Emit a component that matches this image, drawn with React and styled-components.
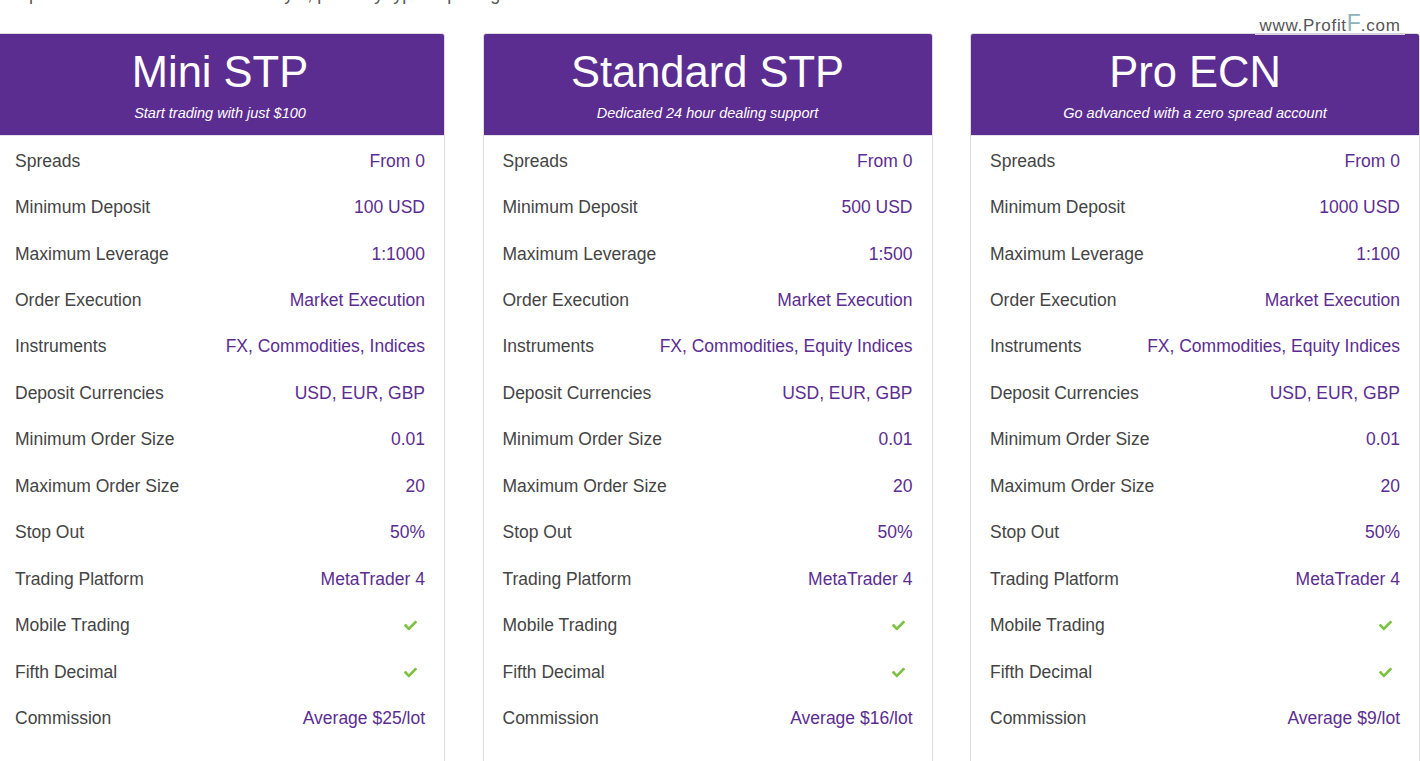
import React from 'react';
import styled, { createGlobalStyle } from 'styled-components';
import { FaCheck } from 'react-icons/fa';

const GlobalStyle = createGlobalStyle`
  html, body {
    margin: 0;
    padding: 0;
    background: #fff;
    overflow: hidden;
  }
  body {
    font-family: 'Liberation Sans', Arial, sans-serif;
  }
`;

const accounts = [
  {
    title: 'Mini STP',
    tagline: 'Start trading with just $100',
    values: ['From 0', '100 USD', '1:1000', 'Market Execution', 'FX, Commodities, Indices', 'USD, EUR, GBP', '0.01', '20', '50%', 'MetaTrader 4', true, true, 'Average $25/lot'],
  },
  {
    title: 'Standard STP',
    tagline: 'Dedicated 24 hour dealing support',
    values: ['From 0', '500 USD', '1:500', 'Market Execution', 'FX, Commodities, Equity Indices', 'USD, EUR, GBP', '0.01', '20', '50%', 'MetaTrader 4', true, true, 'Average $16/lot'],
  },
  {
    title: 'Pro ECN',
    tagline: 'Go advanced with a zero spread account',
    values: ['From 0', '1000 USD', '1:100', 'Market Execution', 'FX, Commodities, Equity Indices', 'USD, EUR, GBP', '0.01', '20', '50%', 'MetaTrader 4', true, true, 'Average $9/lot'],
  },
];

const labels = [
  'Spreads',
  'Minimum Deposit',
  'Maximum Leverage',
  'Order Execution',
  'Instruments',
  'Deposit Currencies',
  'Minimum Order Size',
  'Maximum Order Size',
  'Stop Out',
  'Trading Platform',
  'Mobile Trading',
  'Fifth Decimal',
  'Commission',
];

const App = () => {
  return (
    <Page>
      <GlobalStyle />
      <Intro>Open an account and choose a style, pick any type of pricing</Intro>
      <Watermark>
        www.Profit<BigF>F</BigF>.com
      </Watermark>
      <Cards>
        {accounts.map((acc) => (
          <Card key={acc.title}>
            <CardHeader>
              <Title>{acc.title}</Title>
              <Tagline>{acc.tagline}</Tagline>
            </CardHeader>
            <Rows>
              {labels.map((label, i) => (
                <Row key={label}>
                  <Label>{label}</Label>
                  {acc.values[i] === true ? (
                    <Tick>
                      <FaCheck />
                    </Tick>
                  ) : (
                    <Value>{acc.values[i]}</Value>
                  )}
                </Row>
              ))}
            </Rows>
          </Card>
        ))}
      </Cards>
    </Page>
  );
};

export default App;

const Page = styled.div`
  position: relative;
  width: 1420px;
  height: 761px;
  overflow: hidden;
`;

const Intro = styled.p`
  margin: -18px 0 0;
  padding-left: 15px;
  font-size: 18px;
  line-height: 24px;
  color: #555;
`;

const Watermark = styled.div`
  position: absolute;
  top: 11px;
  left: 1255px;
  width: 150px;
  height: 22px;
  background: #fff;
  border-bottom: 2px solid #d6d3dc;
  font-size: 17px;
  letter-spacing: 0.7px;
  line-height: 24px;
  color: #555;
  text-align: center;
  white-space: nowrap;
  z-index: 2;
`;

const BigF = styled.span`
  font-size: 23px;
  color: #8fb2b9;
  letter-spacing: 0;
`;

const Cards = styled.div`
  display: flex;
  gap: 37.5px;
  margin: 27px 0 0 -5px;
`;

const Card = styled.div`
  flex: 0 0 450px;
  box-sizing: border-box;
  border: 1px solid #dcdcdc;
  border-radius: 3px 3px 0 0;
  background: #fff;
  padding-bottom: 60px;
`;

const CardHeader = styled.div`
  background: #5c2d91;
  border-radius: 2px 2px 0 0;
  border-bottom: 1px solid #e4e1ea;
  padding: 13.5px 10px 12.5px;
  text-align: center;
  color: #fff;
`;

const Title = styled.h2`
  margin: 0;
  font-weight: 400;
  font-size: 43.5px;
  line-height: 48px;
`;

const Tagline = styled.div`
  margin-top: 7px;
  font-style: italic;
  font-size: 14.5px;
  line-height: 20px;
`;

const Rows = styled.div`
  display: flex;
  flex-direction: column;
  padding-top: 2px;
`;

const Row = styled.div`
  display: flex;
  align-items: center;
  justify-content: space-between;
  height: 46.45px;
  padding: 0 19px;
  font-size: 17.5px;
`;

const Label = styled.span`
  color: #444;
`;

const Value = styled.span`
  color: #5c2d91;
`;

const Tick = styled.span`
  display: flex;
  margin-right: 8px;
  color: #7dc242;
  font-size: 13px;
`;
